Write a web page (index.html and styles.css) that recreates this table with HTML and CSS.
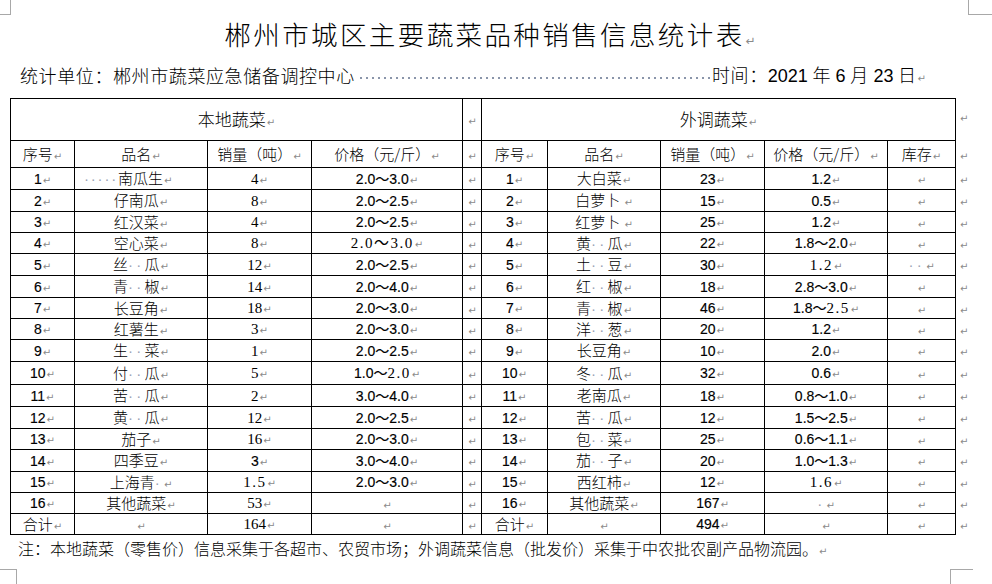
FILE: index.html
```html
<!DOCTYPE html>
<html lang="zh-CN">
<head>
<meta charset="utf-8">
<title>郴州市城区主要蔬菜品种销售信息统计表</title>
<link rel="stylesheet" href="styles.css">
</head>
<body>
<div class="page">
  <span class="crop crop-tl"></span>
  <span class="crop crop-tr"></span>
  <span class="crop crop-bl"></span>
  <span class="crop crop-br"></span>

  <h1 class="title">郴州市城区主要蔬菜品种销售信息统计表<span class="pm">↵</span></h1>

  <div class="meta">
    <span class="unit">统计单位：郴州市蔬菜应急储备调控中心</span>
    <span class="leader"></span>
    <span class="date">时间：<span class="dg">2021</span> 年 <span class="dg">6</span> 月 <span class="dg">23</span> 日<span class="pm">↵</span></span>
  </div>

  <table class="sheet">
    <colgroup>
      <col class="w-seq"><col class="w-name"><col class="w-qty"><col class="w-price">
      <col class="w-gap">
      <col class="w-seq2"><col class="w-name2"><col class="w-qty"><col class="w-price2"><col class="w-stock">
      <col class="w-eol">
    </colgroup>
    <tbody>
      <tr class="h42">
        <td colspan="4" class="group">本地蔬菜</td>
        <td></td>
        <td colspan="5" class="group">外调蔬菜</td>
        <td class="eol top"></td>
      </tr>
      <tr class="h27 head">
        <td>序号</td><td>品名</td><td>销量（吨）</td><td>价格（元/斤）</td>
        <td></td>
        <td>序号</td><td>品名</td><td>销量（吨）</td><td>价格（元/斤）</td><td>库存</td>
        <td class="eol"></td>
      </tr>
      <tr class="h22">
        <td class="n">1</td><td class="lead5"><span class="sp sp5">·····</span>南瓜生</td><td class="s">4</td><td class="n">2.0～3.0</td>
        <td></td>
        <td class="n">1</td><td>大白菜</td><td class="n">23</td><td class="n">1.2</td><td></td>
        <td class="eol"></td>
      </tr>
      <tr class="h22">
        <td class="n">2</td><td>仔南瓜</td><td class="s">8</td><td class="n">2.0～2.5</td>
        <td></td>
        <td class="n">2</td><td>白萝卜&nbsp;</td><td class="n">15</td><td class="n">0.5</td><td></td>
        <td class="eol"></td>
      </tr>
      <tr class="h21">
        <td class="n">3</td><td>红汉菜</td><td class="s">4</td><td class="n">2.0～2.5</td>
        <td></td>
        <td class="n">3</td><td>红萝卜&nbsp;</td><td class="n">25</td><td class="n">1.2</td><td></td>
        <td class="eol"></td>
      </tr>
      <tr class="h21">
        <td class="n">4</td><td>空心菜</td><td class="s">8</td><td class="sw">2.0～3.0</td>
        <td></td>
        <td class="n">4</td><td>黄<span class="sp">··</span>瓜</td><td class="n">22</td><td class="n">1.8～2.0</td><td></td>
        <td class="eol"></td>
      </tr>
      <tr class="h22">
        <td class="n">5</td><td>丝<span class="sp">··</span>瓜</td><td class="s">12</td><td class="n">2.0～2.5</td>
        <td></td>
        <td class="n">5</td><td>土<span class="sp">··</span>豆</td><td class="n">30</td><td class="sw">1.2</td><td class="stock-dots"><span class="sp">··</span></td>
        <td class="eol"></td>
      </tr>
      <tr class="h22">
        <td class="n">6</td><td>青<span class="sp">··</span>椒</td><td class="s">14</td><td class="n">2.0～4.0</td>
        <td></td>
        <td class="n">6</td><td>红<span class="sp">··</span>椒</td><td class="n">18</td><td class="n">2.8～3.0</td><td></td>
        <td class="eol"></td>
      </tr>
      <tr class="h21">
        <td class="n">7</td><td>长豆角</td><td class="s">18</td><td class="n">2.0～3.0</td>
        <td></td>
        <td class="n">7</td><td>青<span class="sp">··</span>椒</td><td class="n">46</td><td class="n">1.8～<span class="swi">2.5</span></td><td></td>
        <td class="eol"></td>
      </tr>
      <tr class="h21">
        <td class="n">8</td><td>红薯生</td><td class="s">3</td><td class="n">2.0～3.0</td>
        <td></td>
        <td class="n">8</td><td>洋<span class="sp">··</span>葱</td><td class="n">20</td><td class="n">1.2</td><td></td>
        <td class="eol"></td>
      </tr>
      <tr class="h22">
        <td class="n">9</td><td>生<span class="sp">··</span>菜</td><td class="s">1</td><td class="n">2.0～2.5</td>
        <td></td>
        <td class="n">9</td><td>长豆角</td><td class="n">10</td><td class="n">2.0</td><td></td>
        <td class="eol"></td>
      </tr>
      <tr class="h23">
        <td class="n">10</td><td>付<span class="sp">··</span>瓜</td><td class="s">5</td><td class="n">1.0～<span class="swi">2.0</span></td>
        <td></td>
        <td class="n">10</td><td>冬<span class="sp">··</span>瓜</td><td class="n">32</td><td class="n">0.6</td><td></td>
        <td class="eol"></td>
      </tr>
      <tr class="h22">
        <td class="n">11</td><td>苦<span class="sp">··</span>瓜</td><td class="s">2</td><td class="n">3.0～4.0</td>
        <td></td>
        <td class="n">11</td><td>老南瓜</td><td class="n">18</td><td class="n">0.8～1.0</td><td></td>
        <td class="eol"></td>
      </tr>
      <tr class="h22">
        <td class="n">12</td><td>黄<span class="sp">··</span>瓜</td><td class="s">12</td><td class="n">2.0～2.5</td>
        <td></td>
        <td class="n">12</td><td>苦<span class="sp">··</span>瓜</td><td class="n">12</td><td class="n">1.5～2.5</td><td></td>
        <td class="eol"></td>
      </tr>
      <tr class="h21">
        <td class="n">13</td><td>茄子</td><td class="s">16</td><td class="n">2.0～3.0</td>
        <td></td>
        <td class="n">13</td><td>包<span class="sp">··</span>菜</td><td class="n">25</td><td class="n">0.6～1.1</td><td></td>
        <td class="eol"></td>
      </tr>
      <tr class="h22">
        <td class="n">14</td><td>四季豆</td><td class="n">3</td><td class="n">3.0～4.0</td>
        <td></td>
        <td class="n">14</td><td>茄<span class="sp">··</span>子</td><td class="n">20</td><td class="n">1.0～1.3</td><td></td>
        <td class="eol"></td>
      </tr>
      <tr class="h21">
        <td class="n">15</td><td>上海青<span class="sp">·</span></td><td class="sw">1.5</td><td class="n">2.0～3.0</td>
        <td></td>
        <td class="n">15</td><td>西红柿</td><td class="n">12</td><td class="sw">1.6</td><td></td>
        <td class="eol"></td>
      </tr>
      <tr class="h21">
        <td class="n">16</td><td>其他蔬菜</td><td class="s">53</td><td></td>
        <td></td>
        <td class="n">16</td><td>其他蔬菜</td><td class="n">167</td><td><span class="sp">·</span></td><td></td>
        <td class="eol"></td>
      </tr>
      <tr class="h21">
        <td>合计</td><td></td><td class="s">164</td><td></td>
        <td></td>
        <td>合计</td><td></td><td class="n">494</td><td></td><td></td>
        <td class="eol"></td>
      </tr>
    </tbody>
  </table>

  <p class="note">注：本地蔬菜（零售价）信息采集于各超市、农贸市场；外调蔬菜信息（批发价）采集于中农批农副产品物流园。<span class="pm">↵</span></p>
</div>
</body>
</html>
```

FILE: styles.css
```css
* {
  box-sizing: border-box;
}

html,
body {
  margin: 0;
  padding: 0;
  background: #ffffff;
}

body {
  width: 992px;
  height: 584px;
  overflow: hidden;
  font-family: "Noto Sans CJK SC", sans-serif;
  font-weight: 300;
  color: #000000;
}

.page {
  position: relative;
  width: 992px;
  height: 584px;
  padding-top: 15px;
}

/* page-corner crop marks (decoration over the page) */
.crop {
  position: absolute;
  border: 0 solid #a8a8a8;
}

.crop-tl {
  left: 0;
  top: 0;
  width: 11px;
  height: 15px;
  border-right-width: 1px;
  border-bottom-width: 1px;
}

.crop-tr {
  left: 968px;
  top: 0;
  width: 24px;
  height: 15px;
  border-left-width: 1px;
  border-bottom-width: 1px;
}

.crop-bl {
  left: 0;
  top: 569px;
  width: 17px;
  height: 15px;
  border-top-width: 1px;
  border-right-width: 1px;
}

.crop-br {
  left: 950px;
  top: 569px;
  width: 23px;
  height: 15px;
  border-top-width: 1px;
  border-left-width: 1px;
}

/* paragraph marks */
.pm {
  font-family: "DejaVu Sans", sans-serif;
  font-size: 10px;
  line-height: 10px;
  font-weight: 400;
  color: #8a8a8a;
  letter-spacing: 0;
  margin-left: 1px;
}

.title {
  margin: 0 0 0 10px;
  width: 960px;
  height: 38px;
  overflow: visible;
  font-size: 26.5px;
  line-height: 38px;
  font-weight: 300;
  letter-spacing: 2.4px;
  text-align: center;
  white-space: nowrap;
}

.title .pm {
  font-size: 12px;
}

.meta {
  display: flex;
  align-items: center;
  margin: 10px 0 0 20px;
  width: 906px;
  height: 24px;
  font-size: 18px;
  line-height: 24px;
  letter-spacing: 0.6px;
  white-space: nowrap;
}

.leader {
  flex: 1;
  align-self: stretch;
  margin: 0 2px 0 3px;
  background-image: radial-gradient(circle, #8a95aa 1px, rgba(255, 255, 255, 0) 1.5px);
  background-size: 6px 4px;
  background-repeat: repeat-x;
  background-position: 0 13px;
}

.dg {
  font-family: "Liberation Sans", sans-serif;
  font-weight: 400;
  letter-spacing: 0;
}

/* table */
.sheet {
  border-collapse: collapse;
  table-layout: fixed;
  margin: 11px 0 0 10px;
  width: 969px;
  font-size: 15px;
}

.w-seq { width: 64px; }
.w-name { width: 133px; }
.w-qty { width: 104px; }
.w-price { width: 151px; }
.w-gap { width: 19px; }
.w-seq2 { width: 66px; }
.w-name2 { width: 113px; }
.w-price2 { width: 123px; }
.w-stock { width: 68px; }
.w-eol { width: 24px; }

.h42 { height: 42px; }
.h27 { height: 27px; }
.h23 { height: 23px; }
.h22 { height: 22px; }
.h21 { height: 21px; }

.sheet td {
  border: 1px solid #000000;
  padding: 0;
  text-align: center;
  vertical-align: middle;
  line-height: 14px;
  white-space: nowrap;
  overflow: hidden;
}

.sheet td::after {
  content: "↵";
  font-family: "DejaVu Sans", sans-serif;
  font-size: 10px;
  line-height: 10px;
  font-weight: 400;
  letter-spacing: 0;
  color: #8a8a8a;
  margin-left: 1px;
  -webkit-text-stroke: 0;
}

.sheet td.eol {
  border: none;
  text-align: left;
  padding-left: 3px;
}

.sheet td.eol.top {
  vertical-align: top;
  padding-top: 10px;
}

.group {
  font-size: 17px;
}

.head td {
  font-size: 15px;
}

.n {
  font-family: "Liberation Sans", "Noto Sans CJK SC", sans-serif;
  font-weight: 400;
  font-size: 14px;
  -webkit-text-stroke: 0.15px #000000;
}

.s {
  font-family: "Liberation Serif", "Noto Sans CJK SC", serif;
  font-weight: 400;
  font-size: 15px;
}

.sw,
.swi {
  font-family: "Liberation Serif", "Noto Sans CJK SC", serif;
  font-weight: 400;
  font-size: 15px;
  letter-spacing: 1.5px;
  -webkit-text-stroke: 0;
}

.sp {
  font-family: "Liberation Sans", sans-serif;
  font-weight: 400;
  color: #9aa3b5;
  letter-spacing: 3.3px;
  -webkit-text-stroke: 0;
}

.lead5 {
  text-align: left !important;
  padding-left: 9px !important;
}

.sp5 {
  letter-spacing: 1.8px;
}

.note {
  margin: 2px 0 0 18px;
  font-size: 16px;
  line-height: 22px;
  letter-spacing: 0;
  white-space: nowrap;
}
```
